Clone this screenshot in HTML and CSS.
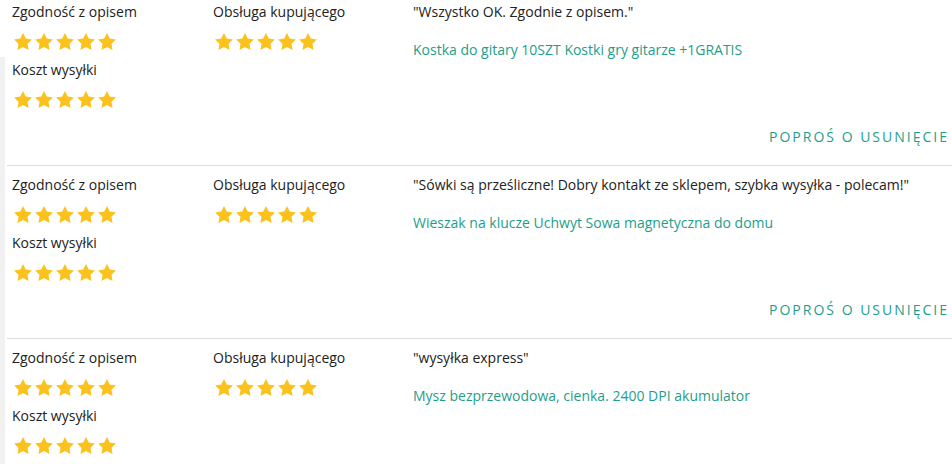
FILE: index.html
```html
<!DOCTYPE html>
<html lang="pl">
<head>
<meta charset="utf-8">
<link rel="stylesheet" href="styles.css">
<title>Oceny</title>
</head>
<body>
<svg width="0" height="0" style="position:absolute">
  <defs>
    <symbol id="star" viewBox="2 2 20 19.02">
      <path d="M12 2l3.09 6.26L22 9.27l-5 4.87 1.18 6.88L12 17.77l-6.18 3.25L7 14.14 2 9.27l6.91-1.01L12 2z"/>
    </symbol>
  </defs>
</svg>
<div class="page">
  <div class="strip"></div>
  <div class="list">
    <div class="review">
      <div class="grid">
        <div class="col">
          <div class="label">Zgodność z opisem</div>
          <div class="stars"><svg><use href="#star"/></svg><svg><use href="#star"/></svg><svg><use href="#star"/></svg><svg><use href="#star"/></svg><svg><use href="#star"/></svg></div>
          <div class="label">Koszt wysyłki</div>
          <div class="stars"><svg><use href="#star"/></svg><svg><use href="#star"/></svg><svg><use href="#star"/></svg><svg><use href="#star"/></svg><svg><use href="#star"/></svg></div>
        </div>
        <div class="col">
          <div class="label">Obsługa kupującego</div>
          <div class="stars"><svg><use href="#star"/></svg><svg><use href="#star"/></svg><svg><use href="#star"/></svg><svg><use href="#star"/></svg><svg><use href="#star"/></svg></div>
        </div>
        <div class="col">
          <div class="quote">"Wszystko OK. Zgodnie z opisem."</div>
          <a class="product" href="#">Kostka do gitary 10SZT Kostki gry gitarze +1GRATIS</a>
        </div>
      </div>
      <div class="footer"><a class="remove" href="#">Poproś o usunięcie</a></div>
    </div>
    <div class="review">
      <div class="grid">
        <div class="col">
          <div class="label">Zgodność z opisem</div>
          <div class="stars"><svg><use href="#star"/></svg><svg><use href="#star"/></svg><svg><use href="#star"/></svg><svg><use href="#star"/></svg><svg><use href="#star"/></svg></div>
          <div class="label">Koszt wysyłki</div>
          <div class="stars"><svg><use href="#star"/></svg><svg><use href="#star"/></svg><svg><use href="#star"/></svg><svg><use href="#star"/></svg><svg><use href="#star"/></svg></div>
        </div>
        <div class="col">
          <div class="label">Obsługa kupującego</div>
          <div class="stars"><svg><use href="#star"/></svg><svg><use href="#star"/></svg><svg><use href="#star"/></svg><svg><use href="#star"/></svg><svg><use href="#star"/></svg></div>
        </div>
        <div class="col">
          <div class="quote">"Sówki są prześliczne! Dobry kontakt ze sklepem, szybka wysyłka - polecam!"</div>
          <a class="product" href="#">Wieszak na klucze Uchwyt Sowa magnetyczna do domu</a>
        </div>
      </div>
      <div class="footer"><a class="remove" href="#">Poproś o usunięcie</a></div>
    </div>
    <div class="review">
      <div class="grid">
        <div class="col">
          <div class="label">Zgodność z opisem</div>
          <div class="stars"><svg><use href="#star"/></svg><svg><use href="#star"/></svg><svg><use href="#star"/></svg><svg><use href="#star"/></svg><svg><use href="#star"/></svg></div>
          <div class="label">Koszt wysyłki</div>
          <div class="stars"><svg><use href="#star"/></svg><svg><use href="#star"/></svg><svg><use href="#star"/></svg><svg><use href="#star"/></svg><svg><use href="#star"/></svg></div>
        </div>
        <div class="col">
          <div class="label">Obsługa kupującego</div>
          <div class="stars"><svg><use href="#star"/></svg><svg><use href="#star"/></svg><svg><use href="#star"/></svg><svg><use href="#star"/></svg><svg><use href="#star"/></svg></div>
        </div>
        <div class="col">
          <div class="quote">"wysyłka express"</div>
          <a class="product" href="#">Mysz bezprzewodowa, cienka. 2400 DPI akumulator</a>
        </div>
      </div>
    </div>
  </div>
</div>
</body>
</html>
```
FILE: styles.css
```css
html, body {
  margin: 0;
  padding: 0;
  background: #fff;
  overflow: hidden;
}
body {
  font-family: "Open Sans", "Noto Sans", sans-serif;
  font-size: 14px;
  color: #222;
}
.page {
  display: flex;
  height: 464px;
}
.strip {
  width: 5px;
  margin-top: 57px;
  background: #f1f1f1;
  flex: none;
}
.list {
  flex: 1;
  margin-left: 2px;
  margin-top: -7px;
}
.review {
  border-bottom: 1px solid #dcdcdc;
  padding: 9px 5px 18px 5px;
}
.grid {
  display: grid;
  grid-template-columns: 201px 200px 1fr;
}
.col {
  display: flex;
  flex-direction: column;
  align-items: flex-start;
}
.label, .quote {
  line-height: 20px;
  height: 20px;
}
.stars {
  display: flex;
  gap: 3px;
  padding-left: 2px;
  margin: 10px 0;
  height: 18px;
  align-items: center;
}
.stars svg {
  width: 18px;
  height: 17px;
  fill: #fbc21d;
}
.product {
  margin-top: 18px;
  line-height: 20px;
  color: #1e9e8a;
  text-decoration: none;
}
.footer {
  display: flex;
  justify-content: flex-end;
  margin-top: 9px;
}
.remove {
  color: #1e9e8a;
  text-decoration: none;
  text-transform: uppercase;
  letter-spacing: 2px;
  line-height: 20px;
  margin-right: -2px;
}
```
